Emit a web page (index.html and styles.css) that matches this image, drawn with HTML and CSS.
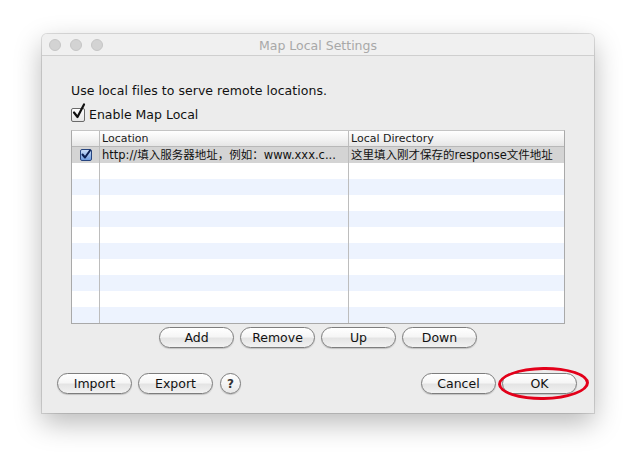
FILE: index.html
```html
<!DOCTYPE html>
<html>
<head>
<meta charset="utf-8">
<link rel="stylesheet" href="styles.css">
</head>
<body>
<div class="window">
  <div class="titlebar">
    <div class="lights"><span class="light"></span><span class="light"></span><span class="light"></span></div>
    <div class="title">Map Local Settings</div>
  </div>
  <div class="content">
    <div class="desc">Use local files to serve remote locations.</div>
    <label class="enable">
      <span class="cb">
        <svg width="16" height="18" viewBox="0 0 16 18"><path d="M3 9.5 L6.5 14 L13 1.5" fill="none" stroke="#111" stroke-width="2.2" stroke-linecap="round" stroke-linejoin="round"/></svg>
      </span>
      <span>Enable Map Local</span>
    </label>
    <div class="table">
      <div class="row head">
        <div class="cell c0"></div>
        <div class="cell c1">Location</div>
        <div class="cell c2">Local Directory</div>
      </div>
      <div class="row sel">
        <div class="cell c0"><span class="rcb"><svg width="12" height="12" viewBox="0 0 12 12"><path d="M2.5 5.5 L5 8.5 L10 1.5" fill="none" stroke="#0b1f52" stroke-width="2" stroke-linecap="round" stroke-linejoin="round"/></svg></span></div>
        <div class="cell c1">http://填入服务器地址，例如：www.xxx.c...</div>
        <div class="cell c2">这里填入刚才保存的response文件地址</div>
      </div>
      <div class="row"><div class="cell c0"></div><div class="cell c1"></div><div class="cell c2"></div></div>
      <div class="row alt"><div class="cell c0"></div><div class="cell c1"></div><div class="cell c2"></div></div>
      <div class="row"><div class="cell c0"></div><div class="cell c1"></div><div class="cell c2"></div></div>
      <div class="row alt"><div class="cell c0"></div><div class="cell c1"></div><div class="cell c2"></div></div>
      <div class="row"><div class="cell c0"></div><div class="cell c1"></div><div class="cell c2"></div></div>
      <div class="row alt"><div class="cell c0"></div><div class="cell c1"></div><div class="cell c2"></div></div>
      <div class="row"><div class="cell c0"></div><div class="cell c1"></div><div class="cell c2"></div></div>
      <div class="row alt"><div class="cell c0"></div><div class="cell c1"></div><div class="cell c2"></div></div>
      <div class="row"><div class="cell c0"></div><div class="cell c1"></div><div class="cell c2"></div></div>
      <div class="row alt"><div class="cell c0"></div><div class="cell c1"></div><div class="cell c2"></div></div>
    </div>
    <div class="actions">
      <button class="btn">Add</button>
      <button class="btn">Remove</button>
      <button class="btn">Up</button>
      <button class="btn">Down</button>
    </div>
  </div>
  <div class="footer">
    <div class="left">
      <button class="btn">Import</button>
      <button class="btn">Export</button>
      <button class="help">?</button>
    </div>
    <div class="right">
      <button class="btn">Cancel</button>
      <div class="okwrap">
        <button class="btn">OK</button>
        <span class="ring"></span>
      </div>
    </div>
  </div>
</div>
</body>
</html>
```

FILE: styles.css
```css
* { box-sizing: border-box; }
html, body { margin: 0; padding: 0; background: #ffffff; }
body {
  font-family: "DejaVu Sans", "Noto Sans CJK SC", sans-serif;
  font-size: 12px;
  color: #111;
  padding: 34px 0 0 42px;
  height: 463px;
  overflow: hidden;
}
.window {
  width: 552px;
  height: 379px;
  background: #ececec;
  border-radius: 5px 5px 0 0;
  box-shadow: 0 0 0 1px rgba(0,0,0,0.12), 0 10px 28px rgba(0,0,0,0.28);
  display: flex;
  flex-direction: column;
}
.titlebar {
  height: 22px;
  background: #f0f0f0;
  border-bottom: 1px solid #cfcfcf;
  border-radius: 5px 5px 0 0;
  display: flex;
  align-items: center;
  position: relative;
}
.lights {
  display: flex;
  gap: 9px;
  padding-left: 7px;
}
.light {
  width: 12px;
  height: 12px;
  border-radius: 50%;
  background: #d3d3d3;
  border: 1px solid #c6c6c6;
}
.title {
  position: absolute;
  left: 0; right: 0;
  text-align: center;
  color: #a8a8a8;
  font-size: 12.5px;
  font-family: "DejaVu Sans", sans-serif;
  top: 4px;
}
.content {
  padding: 27px 29px 0 29px;
}
.desc {
  font-size: 12.5px;
  height: 16px;
  line-height: 16px;
  letter-spacing: 0.05px;
}
.enable {
  display: flex;
  align-items: center;
  gap: 4px;
  margin-top: 7px;
  height: 16px;
  font-size: 12.5px;
}
.cb {
  width: 14px;
  height: 14px;
  border: 1px solid #6a6a6a;
  border-radius: 2px;
  background: linear-gradient(#fff, #e6e6e6);
  position: relative;
  margin-top: 2px;
}
.cb svg { position: absolute; left: -1px; top: -6px; }
.table {
  margin-top: 8px;
  width: 494px;
  border: 1px solid #a9a9a9;
  border-top-color: #c4c4c4;
  background: #fff;
}
.row {
  display: grid;
  grid-template-columns: 28px 249px 1fr;
  height: 16px;
  background: #fff;
}
.row.alt { background: #edf3fe; }
.row.sel { background: #d4d4d4; }
.row.head {
  background: linear-gradient(#ffffff, #f1f1f1 60%, #e6e6e6);
  border-bottom: 1px solid #b8b8b8;
  height: 16px;
}
.cell {
  border-right: 1px solid #bdbdbd;
  font-size: 11.5px;
  line-height: 16px;
  padding-left: 2px;
  white-space: nowrap;
  overflow: hidden;
}
.head .cell { font-size: 11px; line-height: 15px; color: #1a1a1a; }
.cell.c2 { border-right: none; }
.rcb {
  display: block;
  width: 12px;
  height: 12px;
  margin: 2px 0 0 6px;
  border-radius: 2px;
  border: 1px solid #27457f;
  background: linear-gradient(#c9dcf7, #6f9de0);
  position: relative;
}
.rcb svg { position: absolute; left: -1px; top: -1px; }
.actions {
  display: flex;
  justify-content: center;
  gap: 6px;
  margin-top: 3px;
}
.btn {
  width: 75px;
  height: 21px;
  border-radius: 11px;
  border: 1px solid #7d7d7d;
  background: linear-gradient(#ffffff 0%, #f6f6f6 45%, #e4e4e4 55%, #f2f2f2 100%);
  box-shadow: 0 1px 1px rgba(0,0,0,0.18);
  font-family: "DejaVu Sans", sans-serif;
  font-size: 12.5px;
  color: #111;
  padding: 0;
  line-height: 19px;
}
.footer {
  margin-top: 25px;
  display: flex;
  justify-content: space-between;
  align-items: center;
  padding: 0 17px 0 15px;
}
.left, .right {
  display: flex;
  align-items: center;
  gap: 6px;
}
.help {
  width: 21px;
  height: 21px;
  border-radius: 50%;
  border: 1px solid #7d7d7d;
  background: linear-gradient(#ffffff, #e8e8e8);
  box-shadow: 0 1px 1px rgba(0,0,0,0.18);
  font-family: "DejaVu Sans", sans-serif;
  font-weight: bold;
  font-size: 12px;
  color: #333;
  padding: 0;
  margin-left: 1px;
}
.okwrap { position: relative; }
.ring {
  position: absolute;
  left: -4px;
  top: -6px;
  width: 91px;
  height: 33px;
  border: 3.5px solid #e3001a;
  border-radius: 50%;
  transform: rotate(-1deg);
  pointer-events: none;
}
```
